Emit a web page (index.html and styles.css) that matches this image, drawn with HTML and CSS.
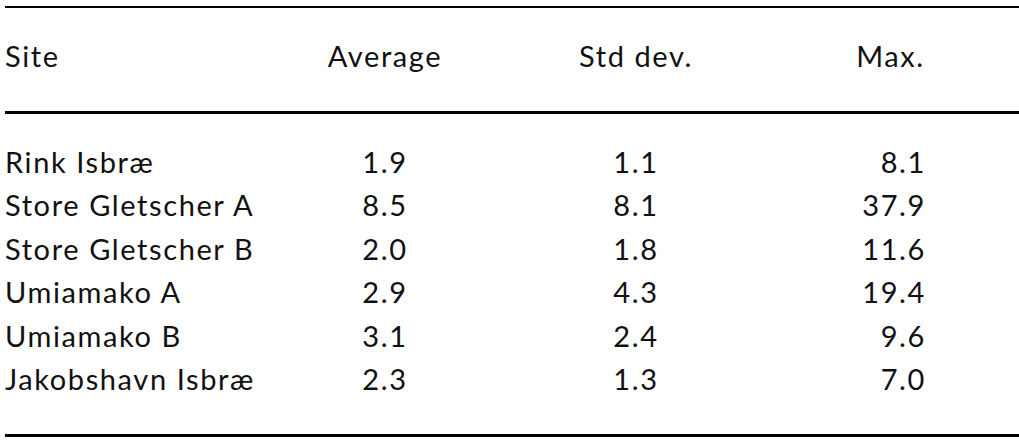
FILE: index.html
```html
<!DOCTYPE html>
<html>
<head>
<meta charset="utf-8">
<link rel="stylesheet" href="styles.css">
</head>
<body>
<div class="table">
  <div class="grid head">
    <div class="c1">Site</div>
    <div class="c2">Average</div>
    <div class="c3">Std dev.</div>
    <div class="c4h">Max.</div>
  </div>
  <div class="grid body">
    <div class="c1">Rink Isbræ</div><div class="c2">1.9</div><div class="c3">1.1</div><div class="c4">8.1</div>
    <div class="c1">Store Gletscher A</div><div class="c2">8.5</div><div class="c3">8.1</div><div class="c4">37.9</div>
    <div class="c1">Store Gletscher B</div><div class="c2">2.0</div><div class="c3">1.8</div><div class="c4">11.6</div>
    <div class="c1">Umiamako A</div><div class="c2">2.9</div><div class="c3">4.3</div><div class="c4">19.4</div>
    <div class="c1">Umiamako B</div><div class="c2">3.1</div><div class="c3">2.4</div><div class="c4">9.6</div>
    <div class="c1">Jakobshavn Isbræ</div><div class="c2">2.3</div><div class="c3">1.3</div><div class="c4">7.0</div>
  </div>
</div>
</body>
</html>
```

FILE: styles.css
```css
html, body {
  margin: 0;
  padding: 0;
  background: #fff;
}
.table {
  margin-top: 6px;
  margin-left: 5px;
  border-top: 2px solid #000;
  font-family: "Lato", "Open Sans", sans-serif;
  font-size: 29px;
  letter-spacing: 1.6px;
  color: #111;
}
.grid {
  display: grid;
  grid-template-columns: 255px 250px 252px 1fr;
  line-height: 43.4px;
  border-bottom: 3px solid #000;
}
.head {
  padding: 26px 0 33.6px;
}
.body {
  padding: 26px 0 33.5px;
}
.c2, .c3, .c4h {
  text-align: center;
}
.c4 {
  text-align: right;
  padding-right: 93px;
}
```
